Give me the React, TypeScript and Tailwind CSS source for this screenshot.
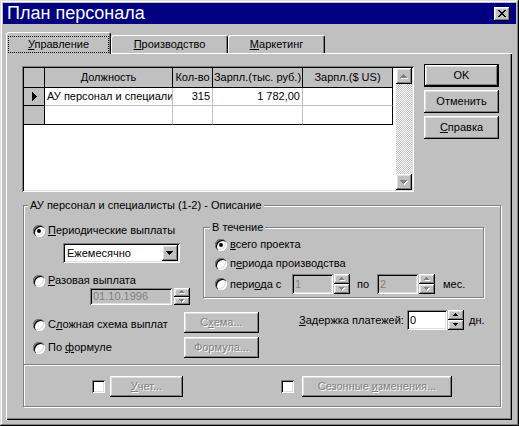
import React from "react";

const raised =
  "shadow-[inset_-1px_-1px_0_#000,inset_1px_1px_0_#fff,inset_-2px_-2px_0_#808080,inset_2px_2px_0_#dfdfdf]";
const sunken =
  "shadow-[inset_1px_1px_0_#808080,inset_-1px_-1px_0_#fff,inset_2px_2px_0_#000,inset_-2px_-2px_0_#dfdfdf]";
const dis = "text-[#808080] [text-shadow:1px_1px_0_#fff]";

function Radio({ checked }: { checked?: boolean }) {
  return (
    <span className="w-[12px] h-[12px] rounded-full bg-white shrink-0 flex items-center justify-center shadow-[inset_1px_1px_0_#808080,inset_2px_2px_0_#000,inset_-1px_-1px_0_#fff,inset_-2px_-2px_0_#dfdfdf]">
      {checked && <span className="w-[4px] h-[4px] rounded-full bg-black" />}
    </span>
  );
}

function Check() {
  return <span className={`block w-[13px] h-[13px] bg-white shrink-0 ${sunken}`} />;
}

const UP5 = "M2 0h1v1h1v1h1v1H0V2h1V1h1z";
const DN5 = "M0 0h5v1H4v1H3v1H2V2H1V1H0z";
const UP7 = "M3 0h1v1h1v1h1v1h1v1H0V3h1V2h1V1h1z";
const DN7 = "M0 0h7v1H6v1H5v1H4v1H3V3H2V2H1V1H0z";

function Arrow({ d, w, h, disabled }: { d: string; w: number; h: number; disabled?: boolean }) {
  return (
    <svg width={w + 1} height={h + 1} viewBox={`0 0 ${w + 1} ${h + 1}`} className="block">
      {disabled && <path d={d} fill="#fff" transform="translate(1,1)" />}
      <path d={d} fill={disabled ? "#808080" : "#000"} />
    </svg>
  );
}

function Spin({ disabled, className }: { disabled?: boolean; className: string }) {
  return (
    <div className={`flex flex-col shrink-0 ${className}`}>
      <div className={`flex-1 bg-[#c0c0c0] ${raised} flex items-center justify-center`}>
        <Arrow d={UP5} w={5} h={3} disabled={disabled} />
      </div>
      <div className={`flex-1 bg-[#c0c0c0] ${raised} flex items-center justify-center`}>
        <Arrow d={DN5} w={5} h={3} disabled={disabled} />
      </div>
    </div>
  );
}

function Btn({
  children,
  className,
  disabled,
}: {
  children: React.ReactNode;
  className: string;
  disabled?: boolean;
}) {
  return (
    <div
      className={`bg-[#c0c0c0] ${raised} flex items-center justify-center shrink-0 whitespace-nowrap ${
        disabled ? dis : ""
      } ${className}`}
    >
      {children}
    </div>
  );
}

export default function App() {
  return (
    <div className="w-[519px] h-[426px] bg-[#c0c0c0] p-[3px] flex flex-col text-black text-[11px] leading-[13px] font-['Liberation_Sans',Arial,sans-serif] shadow-[inset_-1px_-1px_0_#000,inset_1px_1px_0_#dfdfdf,inset_-2px_-2px_0_#808080,inset_2px_2px_0_#fff]">
      {/* Title bar */}
      <div className="h-[21px] bg-[#000080] flex items-center justify-between pl-[4px] pr-[6px] shrink-0">
        <span className="text-white text-[18px] leading-[21px]">План персонала</span>
        <div className={`w-[16px] h-[14px] bg-[#c0c0c0] ${raised} flex items-center justify-center`}>
          <svg width="8" height="7" viewBox="0 0 8 7" className="block">
            <path
              d="M0 0h2v1H0zM6 0h2v1H6zM1 1h2v1H1zM5 1h2v1H5zM2 2h4v1H2zM3 3h2v1H3zM2 4h4v1H2zM1 5h2v1H1zM5 5h2v1H5zM0 6h2v1H0zM6 6h2v1H6z"
              fill="#000"
            />
          </svg>
        </div>
      </div>

      <div className="flex-1 flex flex-col pl-[3px] pr-[4px] pt-[8px] pb-[3px]">
        {/* Tabs */}
        <div className="flex items-end h-[21px] shrink-0">
          <div className="relative z-10 -mb-[1px] h-[22px] w-[105px] bg-[#c0c0c0] border-l border-t border-white border-r border-r-black rounded-t-[3px] shadow-[inset_-1px_0_0_#808080] flex justify-center pt-[3px] px-[1px]">
            <span className="w-full h-[17px] border border-dotted border-black flex items-center justify-center">
              <span>
                <u>У</u>правление
              </span>
            </span>
          </div>
          <div className="h-[18px] w-[117px] bg-[#c0c0c0] border-l border-t border-white border-r border-r-black rounded-t-[3px] shadow-[inset_-1px_0_0_#808080] flex items-center justify-center">
            <span>
              <u>П</u>роизводство
            </span>
          </div>
          <div className="h-[18px] w-[97px] bg-[#c0c0c0] border-l border-t border-white border-r border-r-black rounded-t-[3px] shadow-[inset_-1px_0_0_#808080] flex items-center justify-center">
            <span>
              <u>М</u>аркетинг
            </span>
          </div>
        </div>

        {/* Panel */}
        <div className="flex-1 bg-[#c0c0c0] shadow-[inset_1px_1px_0_#fff,inset_-1px_-1px_0_#000,inset_-2px_-2px_0_#808080] flex flex-col pl-[16px] pt-[11px]">
          {/* Row 1 */}
          <div className="flex items-start">
            <div className={`mt-[2px] w-[392px] h-[126px] bg-white ${sunken} p-[2px] flex`}>
              <div className="w-[369px] flex flex-col self-start">
                {/* header */}
                <div className="flex h-[20px]">
                  <div className="w-[21px] bg-[#c0c0c0] border-r border-b border-black" />
                  <div className="w-[128px] bg-[#c0c0c0] border-r border-b border-black flex items-center justify-center whitespace-nowrap overflow-hidden">
                    Должность
                  </div>
                  <div className="w-[40px] bg-[#c0c0c0] border-r border-b border-black flex items-center justify-center whitespace-nowrap overflow-hidden">
                    Кол-во
                  </div>
                  <div className="w-[90px] bg-[#c0c0c0] border-r border-b border-black flex items-center justify-center whitespace-nowrap overflow-hidden">
                    Зарпл.(тыс. руб.)
                  </div>
                  <div className="w-[90px] bg-[#c0c0c0] border-r border-b border-black flex items-center justify-center whitespace-nowrap overflow-hidden">
                    Зарпл.($ US)
                  </div>
                </div>
                {/* row 1 */}
                <div className="flex h-[18px]">
                  <div className="w-[21px] bg-[#c0c0c0] border-r border-b border-black flex items-center justify-center">
                    <svg width="5" height="9" viewBox="0 0 5 9" className="block">
                      <path d="M0 0h1v1h1v1h1v1h1v1h1v1H4v1H3v1H2v1H1v1H0z" fill="#000" />
                    </svg>
                  </div>
                  <div className="w-[128px] border-r border-b border-[#c0c0c0] flex items-center pl-[2px] whitespace-nowrap overflow-hidden">
                    АУ персонал и специалисты
                  </div>
                  <div className="w-[40px] border-r border-b border-[#c0c0c0] flex items-center justify-end pr-[2px]">
                    315
                  </div>
                  <div className="w-[90px] border-r border-b border-[#c0c0c0] flex items-center justify-end pr-[2px]">
                    1 782,00
                  </div>
                  <div className="w-[90px] border-r border-black border-b border-b-[#c0c0c0]" />
                </div>
                {/* row 2 */}
                <div className="flex h-[19px]">
                  <div className="w-[21px] bg-[#c0c0c0] border-r border-b border-black" />
                  <div className="w-[128px] border-r border-r-[#c0c0c0] border-b border-b-black" />
                  <div className="w-[40px] border-r border-r-[#c0c0c0] border-b border-b-black" />
                  <div className="w-[90px] border-r border-r-[#c0c0c0] border-b border-b-black" />
                  <div className="w-[90px] border-r border-b border-black" />
                </div>
              </div>
              <div className="w-[3px]" />
              {/* scrollbar */}
              <div className="w-[16px] h-full flex flex-col">
                <div className={`h-[16px] bg-[#c0c0c0] ${raised} flex items-center justify-center`}>
                  <Arrow d={UP7} w={7} h={4} disabled />
                </div>
                <div className="flex-1 bg-[repeating-conic-gradient(#c0c0c0_0%_25%,#ffffff_0%_50%)] bg-[length:2px_2px]" />
                <div className={`h-[16px] bg-[#c0c0c0] ${raised} flex items-center justify-center`}>
                  <Arrow d={DN7} w={7} h={4} disabled />
                </div>
              </div>
            </div>

            <div className="ml-[10px] flex flex-col gap-[3px]">
              <div className="w-[75px] h-[23px] border border-black">
                <Btn className="w-full h-full">OK</Btn>
              </div>
              <Btn className="w-[75px] h-[23px]">Отменить</Btn>
              <Btn className="w-[75px] h-[23px]">
                <span>
                  <u>С</u>правка
                </span>
              </Btn>
            </div>
          </div>

          {/* Group box */}
          <div className="relative mt-[13px] ml-[1px] w-[478px] h-[202px] border border-[#808080] shadow-[inset_1px_1px_0_#fff,1px_1px_0_#fff] flex flex-col">
            <span className="absolute -top-[7px] left-[4px] px-[2px] bg-[#c0c0c0] whitespace-nowrap">
              АУ персонал и специалисты (1-2) - Описание
            </span>

            {/* upper section */}
            <div className="h-[159px] border-b border-[#808080] shadow-[0_1px_0_#fff] pl-[9px] pt-[18px] flex flex-col shrink-0">
              {/* Part A */}
              <div className="flex">
                <div className="w-[170px] flex flex-col">
                  <div className="h-[13px] flex items-center gap-[3px]">
                    <Radio checked />
                    <span>
                      <u>П</u>ериодические выплаты
                    </span>
                  </div>
                  <div className={`mt-[6px] ml-[30px] w-[117px] h-[20px] bg-white ${sunken} p-[2px] flex`}>
                    <span className="flex-1 flex items-center pl-[2px]">Ежемесячно</span>
                    <div className={`w-[16px] bg-[#c0c0c0] ${raised} flex items-center justify-center`}>
                      <Arrow d={DN7} w={7} h={4} />
                    </div>
                  </div>
                  <div className="mt-[11px] h-[13px] flex items-center gap-[3px]">
                    <Radio />
                    <span>
                      <u>Р</u>азовая выплата
                    </span>
                  </div>
                  <div className="mt-[1px] ml-[57px] flex">
                    <div className={`w-[82px] h-[17px] bg-[#c0c0c0] ${sunken} flex items-center pl-[3px] text-[#808080]`}>
                      01.10.1996
                    </div>
                    <Spin disabled className="ml-[2px] w-[16px] h-[17px]" />
                  </div>
                </div>

                {/* В течение */}
                <div className="relative mt-[3px] w-[281px] h-[71px] border border-[#808080] shadow-[inset_1px_1px_0_#fff,1px_1px_0_#fff] flex flex-col pl-[11px] pt-[10px]">
                  <span className="absolute -top-[7px] left-[6px] px-[2px] bg-[#c0c0c0] whitespace-nowrap">
                    В течение
                  </span>
                  <div className="h-[13px] flex items-center gap-[3px]">
                    <Radio checked />
                    <span>
                      <u>в</u>сего проекта
                    </span>
                  </div>
                  <div className="mt-[6px] h-[13px] flex items-center gap-[3px]">
                    <Radio />
                    <span>
                      п<u>е</u>риода производства
                    </span>
                  </div>
                  <div className="mt-[4px] h-[20px] flex items-center">
                    <div className="w-[77px] flex items-center gap-[3px]">
                      <Radio />
                      <span>
                        пери<u>о</u>да с
                      </span>
                    </div>
                    <div className={`w-[41px] h-[20px] bg-[#c0c0c0] ${sunken} flex items-center pl-[3px] text-[#808080]`}>
                      1
                    </div>
                    <Spin disabled className="ml-[1px] w-[16px] h-[20px]" />
                    <span className="w-[27px] pl-[7px]">по</span>
                    <div className={`w-[41px] h-[20px] bg-[#c0c0c0] ${sunken} flex items-center pl-[3px] text-[#808080]`}>
                      2
                    </div>
                    <Spin disabled className="ml-[1px] w-[16px] h-[20px]" />
                    <span className="ml-[8px]">мес.</span>
                  </div>
                </div>
              </div>

              {/* Part B row 1 */}
              <div className="mt-[5px] flex items-start">
                <div className="w-[151px] mt-[8px] h-[13px] flex items-center gap-[3px]">
                  <Radio />
                  <span>
                    С<u>л</u>ожная схема выплат
                  </span>
                </div>
                <Btn disabled className="mt-[2px] w-[75px] h-[21px]">
                  <span>
                    С<u>х</u>ема...
                  </span>
                </Btn>
                <span className="ml-[40px] mt-[4px] w-[108px] whitespace-nowrap">
                  <u>З</u>адержка платежей:
                </span>
                <div className={`w-[40px] h-[20px] bg-white ${sunken} flex items-center pl-[3px]`}>0</div>
                <Spin className="ml-[1px] w-[16px] h-[20px]" />
                <span className="ml-[5px] mt-[4px]">дн.</span>
              </div>

              {/* Part B row 2 */}
              <div className="mt-[4px] flex items-start">
                <div className="w-[151px] mt-[4px] h-[13px] flex items-center gap-[3px]">
                  <Radio />
                  <span>
                    По <u>ф</u>ормуле
                  </span>
                </div>
                <Btn disabled className="w-[75px] h-[21px]">
                  Формула...
                </Btn>
              </div>
            </div>

            {/* lower section */}
            <div className="flex-1 flex items-center pl-[68px] pt-[1px]">
              <Check />
              <Btn disabled className="ml-[5px] w-[73px] h-[21px]">
                <span>
                  <u>У</u>чет...
                </span>
              </Btn>
              <span className="ml-[98px]">
                <Check />
              </span>
              <Btn disabled className="ml-[8px] w-[150px] h-[21px]">
                <span>
                  Сезонные <u>и</u>зменения...
                </span>
              </Btn>
            </div>
          </div>
        </div>
      </div>
    </div>
  );
}
